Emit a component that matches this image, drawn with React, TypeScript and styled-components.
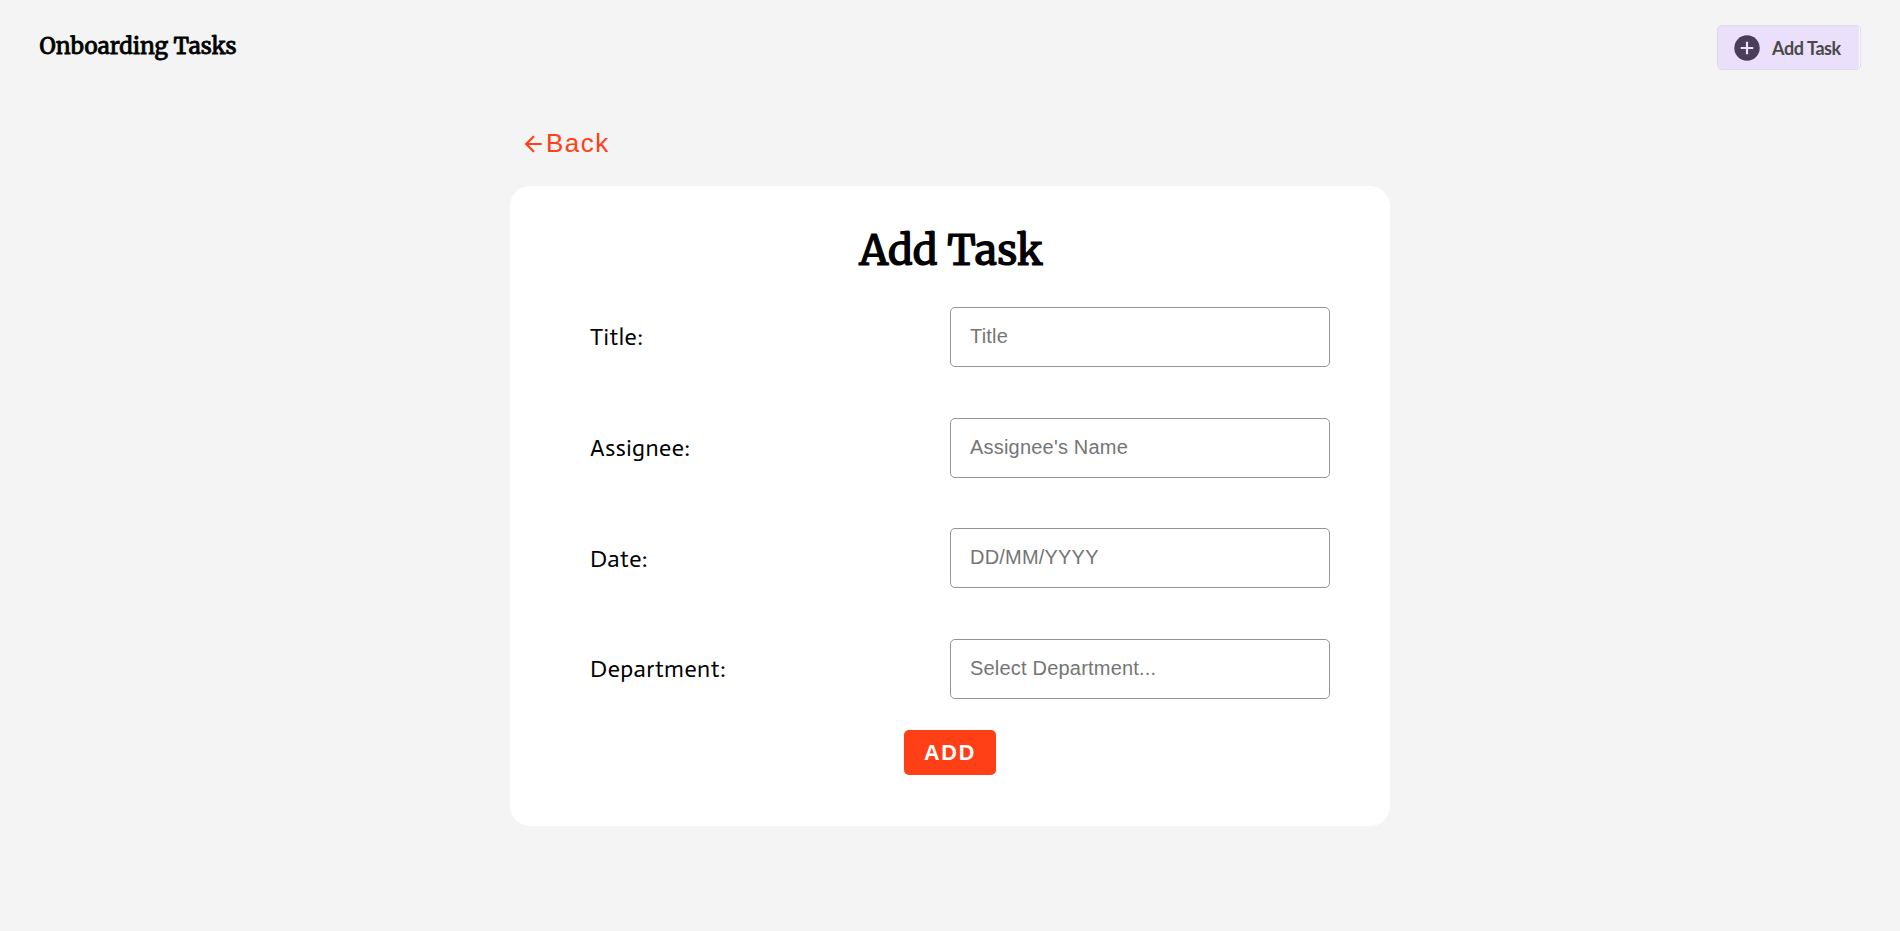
import React from "react";
import styled, { createGlobalStyle } from "styled-components";

const GlobalStyle = createGlobalStyle`
  * { box-sizing: border-box; }
  body { margin: 0; background: #f4f4f4; color: #000; }
  button, input { font-family: "Liberation Sans", Arial, sans-serif; }
`;

const Page = styled.div`
  min-height: 100vh;
  display: flex;
  flex-direction: column;
`;

const Header = styled.header`
  height: 95px;
  padding: 25px 39px 0;
  display: flex;
  align-items: flex-start;
  justify-content: space-between;
`;

const Brand = styled.h2`
  margin: 0;
  padding: 4px 0 0 0.5px;
  font: 400 22.4px/34px Merriweather, "DejaVu Serif", serif;
  -webkit-text-stroke: 0.8px #000;
  white-space: nowrap;
`;

const AddTaskButton = styled.button`
  width: 144px;
  height: 45px;
  padding: 0 0 0 16px;
  display: flex;
  align-items: center;
  gap: 12px;
  border: 1px solid #dfdbe4;
  border-radius: 5px;
  background: #eae0fb;
  box-shadow: inset -1px 0 #fff;
  color: #4a4947;
  font: 700 18px/24px Lato, sans-serif;
  letter-spacing: -0.4px;
  white-space: nowrap;
`;

const Content = styled.main`
  width: 880px;
  margin: 0 auto;
`;

const BackButton = styled.button`
  height: 91px;
  padding: 35px 0 0 12px;
  display: flex;
  align-items: flex-start;
  border: 0;
  background: none;
  color: #ff4017;
  font-size: 26px;
  line-height: 26px;
  letter-spacing: 1.5px;
`;

const Card = styled.section`
  height: 640px;
  border-radius: 20px;
  background: #fff;
  display: flex;
  flex-direction: column;
  align-items: center;
`;

const Heading = styled.h1`
  margin: 32px 0 0 2px;
  height: 89.2px;
  font: 400 41px/65px Merriweather, "DejaVu Serif", serif;
  -webkit-text-stroke: 1.2px #000;
  white-space: nowrap;
`;

const Form = styled.form`
  width: 100%;
  padding: 0 60px 0 80px;
  display: flex;
  flex-direction: column;
  align-items: center;
`;

const Field = styled.div`
  width: 100%;
  height: 60px;
  margin-bottom: 50.6px;
  display: flex;
  align-items: center;
  justify-content: space-between;

  &:last-of-type {
    margin-bottom: 31px;
  }
`;

const Label = styled.label`
  padding-top: 0.6px;
  font: 400 24px/60px Actor, "Noto Sans", sans-serif;
  letter-spacing: 0.5px;
`;

const Input = styled.input`
  width: 380px;
  height: 60px;
  padding: 0 19px 1px;
  border: 1px solid #949494;
  border-radius: 5px;
  background: #fff;
  font-size: 20px;
  letter-spacing: 0.2px;
  outline: none;

  &::placeholder {
    color: #757575;
  }
`;

const SubmitButton = styled.button`
  width: 92px;
  height: 45px;
  margin-right: 20px;
  padding: 1px 0 0;
  border: 0;
  border-radius: 5px;
  background: #ff4017;
  color: #fff;
  font-size: 21.6px;
  font-weight: 700;
  letter-spacing: 1.7px;
`;

const fields = [
  { id: "title", label: "Title:", placeholder: "Title" },
  { id: "assignee", label: "Assignee:", placeholder: "Assignee's Name" },
  { id: "date", label: "Date:", placeholder: "DD/MM/YYYY" },
  { id: "department", label: "Department:", placeholder: "Select Department..." },
];

const PlusIcon = () => (
  <svg width="26" height="26" viewBox="0 0 26 26" aria-hidden="true">
    <circle cx="13" cy="13" r="12.7" fill="#493d5a" />
    <path d="M13 6.7v12.6M6.7 13h12.6" stroke="#eae0fb" strokeWidth="2.2" />
  </svg>
);

const ArrowIcon = () => (
  <svg width="24" height="28" viewBox="0 0 24 28" fill="none" stroke="currentColor" strokeWidth="2.2" aria-hidden="true">
    <path d="M12 6.2L4.2 14L12 21.8M4 14H19.7" />
  </svg>
);

export default function App() {
  return (
    <Page>
      <GlobalStyle />
      <Header>
        <Brand>Onboarding Tasks</Brand>
        <AddTaskButton type="button">
          <PlusIcon />
          Add Task
        </AddTaskButton>
      </Header>
      <Content>
        <BackButton type="button">
          <ArrowIcon />
          Back
        </BackButton>
        <Card>
          <Heading>Add Task</Heading>
          <Form>
            {fields.map((f) => (
              <Field key={f.id}>
                <Label htmlFor={f.id}>{f.label}</Label>
                <Input id={f.id} placeholder={f.placeholder} />
              </Field>
            ))}
            <SubmitButton type="button">ADD</SubmitButton>
          </Form>
        </Card>
      </Content>
    </Page>
  );
}
